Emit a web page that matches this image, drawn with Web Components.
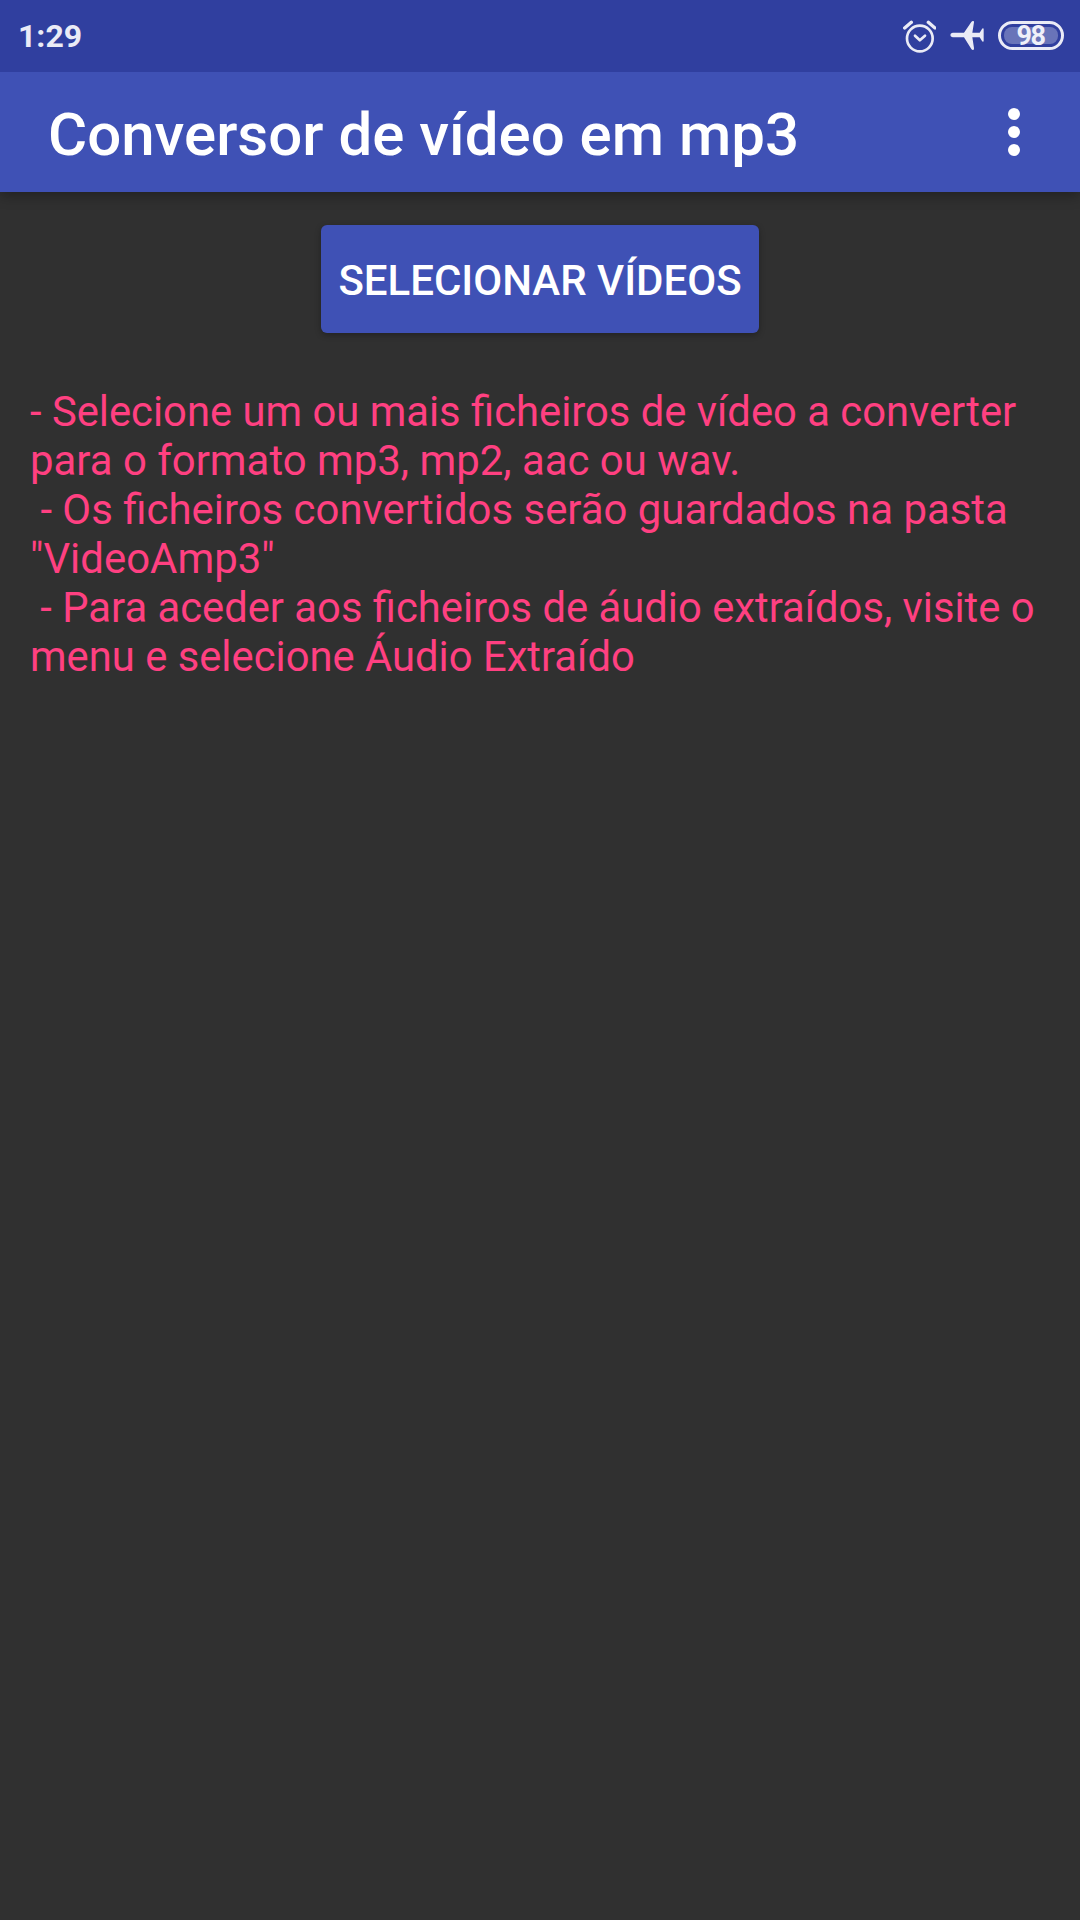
<!DOCTYPE html>
<html lang="pt">
<head>
<meta charset="utf-8">
<title>Conversor de vídeo em mp3</title>
<style>
html,body{margin:0;height:100%;background:#303030}
body{font-family:Roboto,sans-serif;overflow:hidden}
</style>
</head>
<body>
<video-converter-app></video-converter-app>
<script>
const define = (name, html) => customElements.define(name, class extends HTMLElement {
  constructor() {
    super();
    const t = document.createElement('template');
    t.innerHTML = html;
    this.attachShadow({mode: 'open'}).append(t.content.cloneNode(true));
  }
});

define('battery-pill', `
<style>
:host{display:block;box-sizing:border-box;width:66px;height:29px;border:3px solid #eaebf6;border-radius:15px;padding:3px}
.fill{height:17px;border-radius:8px;background:rgba(255,255,255,.28);display:flex;justify-content:center;align-items:center;
font:700 27px/17px Roboto,sans-serif;letter-spacing:-1.6px;color:#eff0f9;padding:2px 1px 0 0;box-sizing:border-box}
</style>
<div class="fill"><slot></slot></div>`);

define('status-bar', `
<style>
:host{display:flex;box-sizing:border-box;height:72px;background:#303f9f;color:#eaebf6;justify-content:space-between;padding:0 16px 0 18px}
.time{font-weight:700;font-size:32px;line-height:38px;padding-top:17px}
.icons{display:flex;padding-top:20px}
svg{display:block;flex:none}
.alarm{margin-right:14px}
.plane{margin-right:14px}
battery-pill{margin-top:1px}
</style>
<div class="time"><slot></slot></div>
<div class="icons">
<svg class="alarm" width="34" height="34" viewBox="0 0 102 102" fill="none" stroke="#eaebf6" stroke-width="8" stroke-linecap="round" stroke-linejoin="round">
<circle cx="53.5" cy="55.5" r="38.5"/><path stroke-width="10" d="M8 24 28 7M79 7 99 24"/><path d="M39 47 53.5 61 69 47"/></svg>
<svg class="plane" width="34" height="34" viewBox="0 0 102 102" fill="#eaebf6"><path d="M8 38H42L64 6Q66 3 69 3Q73 3 72 7L67 38H89L96 27Q97 25 99 25Q101 25 101 28V62Q101 65 99 65Q97 65 96 63L89 52H67L72 84Q73 90 69 90Q66 90 64 87L42 52H8Q1 51 1 45T8 38Z"/></svg>
<battery-pill>98</battery-pill>
</div>`);

define('overflow-menu', `
<style>
:host{display:flex;flex-direction:column;gap:6px;padding-top:36px}
i{display:block;width:12px;height:12px;border-radius:50%;background:#fff}
</style><i></i><i></i><i></i>`);

define('app-bar', `
<style>
:host{display:flex;box-sizing:border-box;height:120px;background:#3f51b5;color:#fff;justify-content:space-between;padding:0 60px 0 48px;
box-shadow:0 4px 12px rgba(0,0,0,.3);clip-path:inset(0 0 -24px 0);position:relative}
h1{margin:0;font-weight:500;font-size:60px;line-height:70px;padding-top:28px;white-space:nowrap}
</style>
<h1><slot></slot></h1><overflow-menu></overflow-menu>`);

define('raised-button', `
<style>
:host{display:block}
button{all:unset;display:flex;box-sizing:border-box;width:438px;height:108px;justify-content:center;align-items:center;border-radius:6px;background:#3f51b5;color:#fff;
font:500 42px/50px Roboto,sans-serif;padding-top:4px;white-space:nowrap;box-shadow:0 2px 6px rgba(0,0,0,.3)}
</style>
<button><slot></slot></button>`);

define('help-line', `
<style>
:host{display:block;height:49px;line-height:49px}
slot{white-space:pre}
</style><slot></slot>`);

define('help-text', `
<style>
:host{display:block;color:#ff4081;font-size:42px}
</style><slot></slot>`);

define('video-converter-app', `
<style>
:host{display:flex;flex-direction:column;min-height:100vh;background:#303030}
main{display:flex;flex-direction:column;align-items:center;padding-top:33px}
help-text{align-self:stretch;margin-top:54px;padding:0 30px}
.tight{font-size:41.76px}
.snug{font-size:41.92px}
</style>
<status-bar>1:29</status-bar>
<app-bar>Conversor de vídeo em mp3</app-bar>
<main>
<raised-button>SELECIONAR VÍDEOS</raised-button>
<help-text>
<help-line class="tight">- Selecione um ou mais ficheiros de vídeo a converter</help-line>
<help-line class="snug">para o formato mp3, mp2, aac ou wav.</help-line>
<help-line class="snug"> - Os ficheiros convertidos serão guardados na pasta</help-line>
<help-line class="snug">"VideoAmp3"</help-line>
<help-line class="tight"> - Para aceder aos ficheiros de áudio extraídos, visite o</help-line>
<help-line class="tight">menu e selecione Áudio Extraído</help-line>
</help-text>
</main>`);
</script>
</body>
</html>
